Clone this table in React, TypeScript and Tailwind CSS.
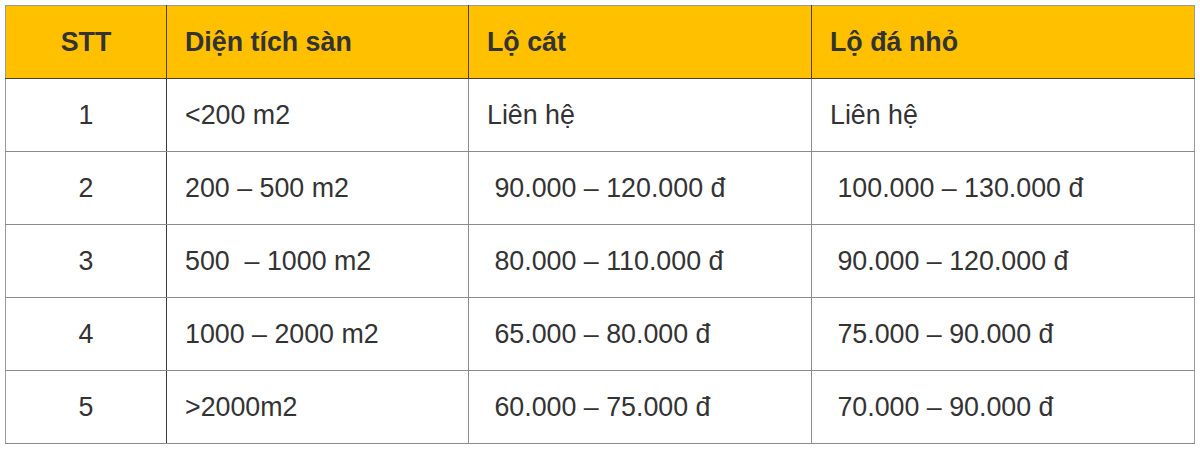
const rows = [
  ["1", "<200 m2", "Liên hệ", "Liên hệ"],
  ["2", "200 – 500 m2", "\u00a090.000 – 120.000 đ", "\u00a0100.000 – 130.000 đ"],
  ["3", "500 \u00a0– 1000 m2", "\u00a080.000 – 110.000 đ", "\u00a090.000 – 120.000 đ"],
  ["4", "1000 – 2000 m2", "\u00a065.000 – 80.000 đ", "\u00a075.000 – 90.000 đ"],
  ["5", ">2000m2", "\u00a060.000 – 75.000 đ", "\u00a070.000 – 90.000 đ"],
];

export default function App() {
  return (
    <div className="w-[1200px] h-[449px] bg-white pt-[5px] pl-[5px] font-['Liberation_Sans',Arial,sans-serif] text-[#333333] text-[26.8px]">
      <table className="border-collapse table-fixed w-[1189px] border-[1.5px] border-[#9a9a9a]">
        <colgroup>
          <col className="w-[161px]" />
          <col className="w-[302px]" />
          <col className="w-[343px]" />
          <col className="w-[383px]" />
        </colgroup>
        <thead>
          <tr className="h-[73px] bg-[#ffc000] font-bold">
            <th className="border-r border-b border-[#4a4030] text-center">STT</th>
            <th className="border-r border-b border-[#4a4030] text-left pl-[18px]">Diện tích sàn</th>
            <th className="border-r border-b border-[#4a4030] text-left pl-[18px]">Lộ cát</th>
            <th className="border-b border-[#4a4030] text-left pl-[18px]">Lộ đá nhỏ</th>
          </tr>
        </thead>
        <tbody>
          {rows.map((r, i) => (
            <tr key={i} className="h-[73px]">
              <td className="border-r border-b border-r-[#3a3a3a] border-b-[#8c8c8c] text-center">{r[0]}</td>
              <td className="border-r border-b border-[#8c8c8c] pl-[18px] whitespace-pre">{r[1]}</td>
              <td className="border-r border-b border-[#8c8c8c] pl-[18px] whitespace-pre">{r[2]}</td>
              <td className="border-b border-[#8c8c8c] pl-[18px] whitespace-pre">{r[3]}</td>
            </tr>
          ))}
        </tbody>
      </table>
    </div>
  );
}
